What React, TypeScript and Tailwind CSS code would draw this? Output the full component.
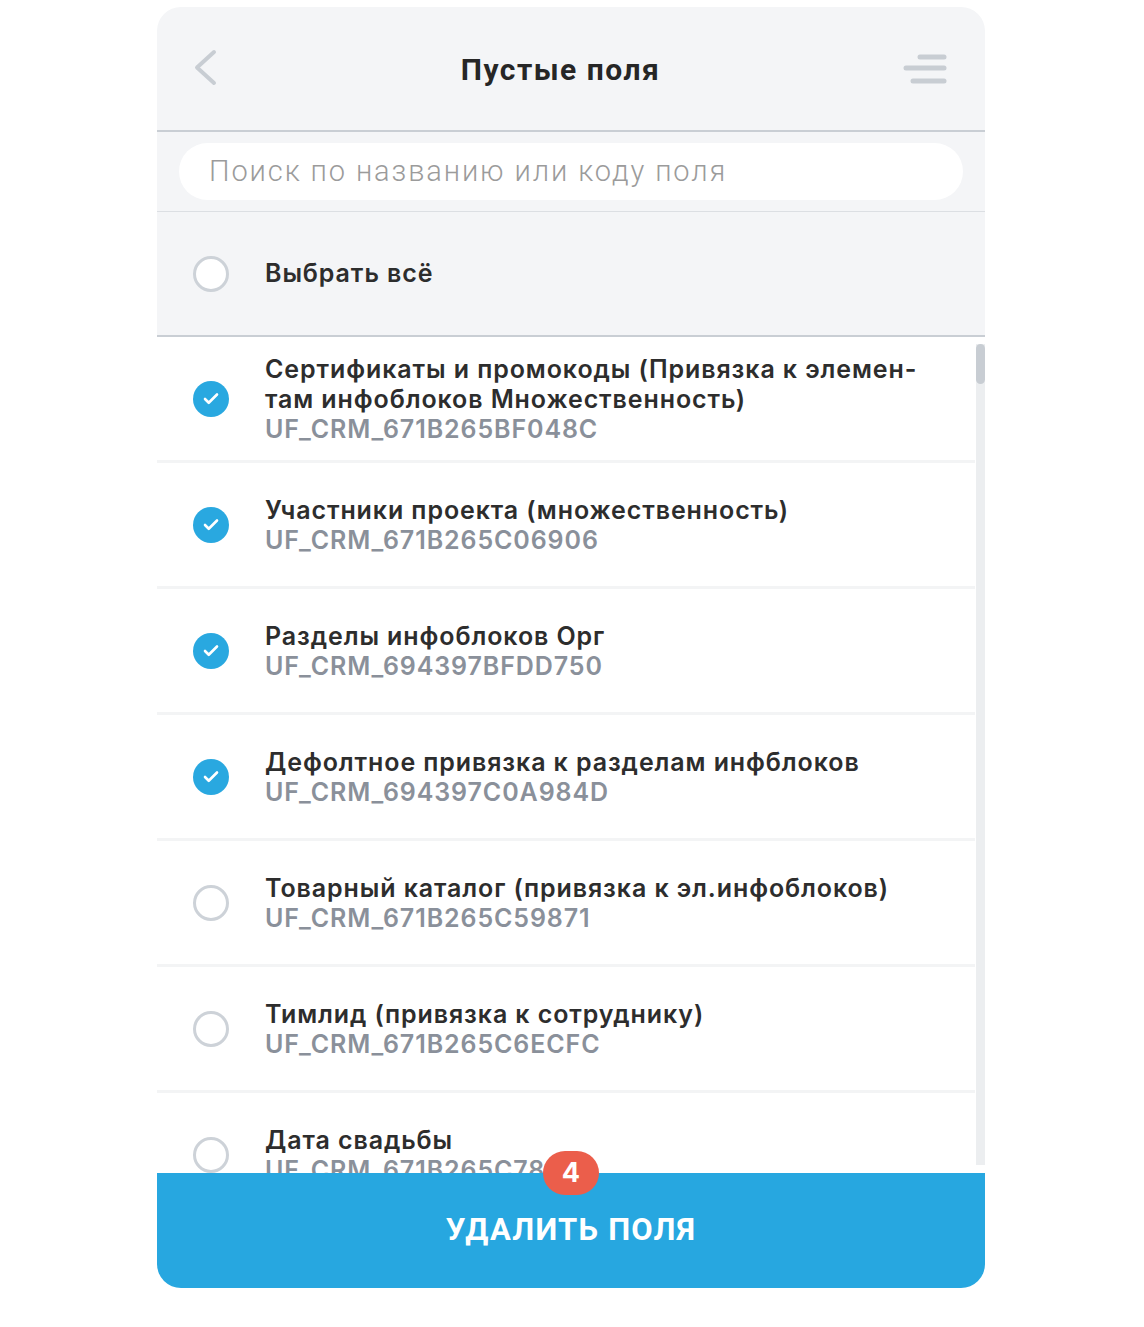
import { Check } from "lucide-react";

type Field = { title: string; code: string; checked: boolean };

const fields: Field[] = [
  {
    title: "Сертификаты и промокоды (Привязка к элемен-\nтам инфоблоков Множественность)",
    code: "UF_CRM_671B265BF048C",
    checked: true,
  },
  { title: "Участники проекта (множественность)", code: "UF_CRM_671B265C06906", checked: true },
  { title: "Разделы инфоблоков Орг", code: "UF_CRM_694397BFDD750", checked: true },
  { title: "Дефолтное привязка к разделам инфблоков", code: "UF_CRM_694397C0A984D", checked: true },
  { title: "Товарный каталог (привязка к эл.инфоблоков)", code: "UF_CRM_671B265C59871", checked: false },
  { title: "Тимлид (привязка к сотруднику)", code: "UF_CRM_671B265C6ECFC", checked: false },
  { title: "Дата свадьбы", code: "UF_CRM_671B265C78C1A", checked: false },
];

function RoundCheck({ checked }: { checked: boolean }) {
  if (checked) {
    return (
      <span className="flex h-9 w-9 shrink-0 items-center justify-center rounded-full bg-[#29a8e0]">
        <Check className="h-[18px] w-[18px] text-white" strokeWidth={3.5} />
      </span>
    );
  }
  return <span className="h-9 w-9 shrink-0 rounded-full border-[3px] border-[#cdd2d8] bg-white" />;
}

export default function App() {
  const listFont = "font-['Inter','DejaVu_Sans',sans-serif] text-[25px] font-semibold tracking-[0.9px]";
  return (
    <div className="min-h-[1327px] bg-white pl-[157px] pt-[7px]">
      <div className="relative flex h-[1281px] w-[828px] flex-col overflow-hidden rounded-[24px] bg-white">
        {/* header */}
        <header className="flex h-[125px] shrink-0 items-center justify-between border-b-2 border-[#c9ced4] bg-[#f4f5f7] pl-[35px] pr-[36px]">
          <svg width="26" height="40" viewBox="0 0 26 40" className="mt-[-1px]">
            <path d="M22 4 L5 19.5 L22 35" fill="none" stroke="#c8cdd3" strokeWidth="4" strokeLinecap="round" strokeLinejoin="round" />
          </svg>
          <h1 className="mt-[1px] font-['Roboto',sans-serif] text-[30px] font-bold tracking-[1.5px] text-[#262626]">
            Пустые поля
          </h1>
          <svg width="46" height="34" viewBox="0 0 46 34">
            <g stroke="#c8cdd3" strokeWidth="5" strokeLinecap="round">
              <line x1="17" y1="5" x2="41" y2="5" />
              <line x1="3" y1="16" x2="41" y2="16" />
              <line x1="10" y1="29" x2="41" y2="29" />
            </g>
          </svg>
        </header>

        {/* search */}
        <div className="shrink-0 border-b border-[#dcdfe3] bg-[#f4f5f7] px-[22px] py-[11px]">
          <div className="flex h-[57px] items-center rounded-full bg-white pl-[30px]">
            <span className="font-['Roboto',sans-serif] text-[29px] font-light tracking-[1.9px] text-[#9b9b9b]">
              Поиск по названию или коду поля
            </span>
          </div>
        </div>

        {/* select all */}
        <div className="flex h-[125px] shrink-0 items-center gap-[36px] border-b-2 border-[#c9ced4] bg-[#f4f5f7] pl-[36px]">
          <RoundCheck checked={false} />
          <span className={`${listFont} text-[#2d2d2d]`}>Выбрать всё</span>
        </div>

        {/* list */}
        <div className="relative min-h-0 flex-1 overflow-hidden">
          <div className="pr-[10px]">
            {fields.map((f) => (
              <div
                key={f.code}
                className="flex h-[126px] items-center gap-[36px] border-b-[3px] border-[#f3f4f5] pl-[36px]"
              >
                <RoundCheck checked={f.checked} />
                <div className={`${listFont} leading-[30px]`}>
                  <div className="whitespace-pre-line text-[#2d2d2d]">{f.title}</div>
                  <div className="text-[#8a909a]">{f.code}</div>
                </div>
              </div>
            ))}
          </div>
          {/* scrollbar */}
          <div className="absolute right-0 top-[7px] bottom-[8px] w-[9px] bg-[#eceef0]">
            <div className="h-[40px] w-[9px] rounded-full bg-[#c8cdd3]" />
          </div>
        </div>

        {/* button */}
        <div className="relative flex h-[115px] shrink-0 items-center justify-center bg-[#27a7e0]">
          <span className="font-['Roboto',sans-serif] text-[31px] font-bold tracking-[1.25px] text-white">
            УДАЛИТЬ ПОЛЯ
          </span>
          <span className="absolute left-[386px] top-[-22px] flex h-[44px] w-[56px] items-center justify-center rounded-full bg-[#eb5e4b] font-['Inter',sans-serif] text-[27px] font-bold text-white">
            4
          </span>
        </div>
      </div>
    </div>
  );
}
